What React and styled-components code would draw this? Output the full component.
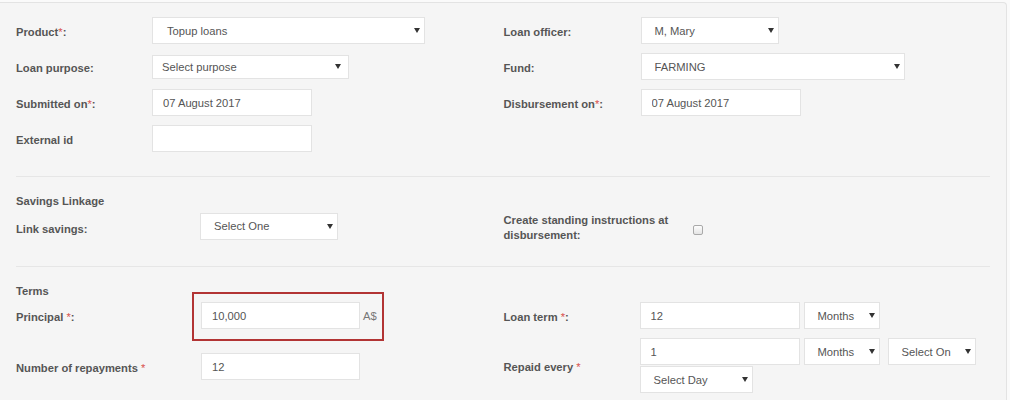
import React from "react";
import styled, { createGlobalStyle } from "styled-components";

const Global = createGlobalStyle`
  html, body { margin: 0; padding: 0; background: #fafafa; }
  body {
    font-family: "Liberation Sans", Arial, sans-serif;
    font-size: 11.2px;
    color: #555;
  }
`;

const Panel = styled.div`
  box-sizing: border-box;
  margin-top: 2px;
  width: 1007px;
  height: 398px;
  overflow: hidden;
  background: #f5f5f5;
  border-top: 1px solid #e3e3e3;
  border-right: 1px solid #e3e3e3;
  border-top-right-radius: 4px;
  padding: 14px 15px 0 16px;
`;

const Columns = styled.div`
  display: grid;
  grid-template-columns: 1fr 1fr;
  align-items: ${(p) => p.$align || "start"};
`;

const Stack = styled.div`
  display: flex;
  flex-direction: column;
  gap: ${(p) => p.$gap ?? 9}px;
`;

const Field = styled.div`
  display: flex;
  align-items: center;
  min-height: 27px;
`;

const Label = styled.label`
  flex: 0 0 ${(p) => p.$w}px;
  box-sizing: border-box;
  padding-top: ${(p) => p.$shift ?? 4}px;
  padding-right: 12px;
  font-weight: bold;
  line-height: 15px;
  color: #555;
`;

const Req = styled.span`
  color: #d9534f;
  font-weight: normal;
`;

const Heading = styled.div`
  font-weight: bold;
  line-height: 15px;
  color: #555;
  margin-bottom: ${(p) => p.$mb ?? 0}px;
`;

const Divider = styled.hr`
  border: 0;
  height: 1px;
  background: #e6e6e6;
  margin: ${(p) => p.$top}px 1px 17px 0;
`;

const TextInput = styled.input`
  box-sizing: border-box;
  width: ${(p) => p.$w}px;
  height: 27px;
  margin: 0;
  padding: 0 10px;
  border: 1px solid #e3e3e3;
  border-radius: 0;
  background: #fff;
  font-family: "Liberation Sans", Arial, sans-serif;
  font-size: 11.2px;
  color: #555;
  outline: none;
`;

const SelectBox = styled.div`
  box-sizing: border-box;
  width: ${(p) => p.$w}px;
  height: ${(p) => p.$h ?? 27}px;
  margin-left: ${(p) => p.$ml ?? 0}px;
  padding: 0 ${(p) => p.$pr ?? 4}px 0 ${(p) => p.$pl ?? 13}px;
  display: flex;
  align-items: center;
  justify-content: space-between;
  background: #fff;
  border: 1px solid #e3e3e3;
  color: #555;
  font-size: 11.2px;
  white-space: nowrap;
`;

const Caret = styled.span`
  flex: none;
  width: 0;
  height: 0;
  border-left: 3px solid transparent;
  border-right: 3px solid transparent;
  border-top: 5px solid #333;
`;

const Controls = styled.div`
  flex: 1;
  display: flex;
  flex-wrap: wrap;
  align-items: center;
  gap: 1px 4px;
`;

const Highlighted = styled.div`
  position: relative;
  display: flex;
  align-items: center;
  &::before {
    content: "";
    position: absolute;
    top: -10px;
    left: -9px;
    right: -7px;
    bottom: -12px;
    border: 2px solid #b23434;
    pointer-events: none;
  }
`;

const Addon = styled.span`
  margin-left: 3px;
  color: #777;
  font-size: 11.2px;
`;

const Checkbox = styled.span`
  flex: none;
  box-sizing: border-box;
  width: 10px;
  height: 10px;
  margin-left: 5px;
  margin-top: 8px;
  border: 1px solid #a9a9a9;
  border-radius: 2px;
  background: linear-gradient(#fdfdfd, #e4e4e4);
`;

const Select = ({ children, ...rest }) => (
  <SelectBox {...rest}>
    <span>{children}</span>
    <Caret />
  </SelectBox>
);

export default function App() {
  return (
    <>
      <Global />
      <Panel>
        <Columns>
          <Stack>
            <Field>
              <Label $w={136}>
                Product<Req>*</Req>:
              </Label>
              <Select $w={273} $pl={14}>Topup loans</Select>
            </Field>
            <Field>
              <Label $w={136}>Loan purpose:</Label>
              <Select $w={197} $h={24} $pl={9} $pr={7}>
                Select purpose
              </Select>
            </Field>
            <Field>
              <Label $w={136}>
                Submitted on<Req>*</Req>:
              </Label>
              <TextInput $w={160} readOnly defaultValue="07 August 2017" />
            </Field>
            <Field>
              <Label $w={136}>External id</Label>
              <TextInput $w={160} readOnly defaultValue="" />
            </Field>
          </Stack>
          <Stack>
            <Field>
              <Label $w={137}>Loan officer:</Label>
              <Select $w={138}>M, Mary</Select>
            </Field>
            <Field>
              <Label $w={137}>Fund:</Label>
              <Select $w={264}>FARMING</Select>
            </Field>
            <Field>
              <Label $w={137}>
                Disbursement on<Req>*</Req>:
              </Label>
              <TextInput $w={160} readOnly defaultValue="07 August 2017" />
            </Field>
          </Stack>
        </Columns>

        <Divider $top={24} />

        <Heading $mb={0}>Savings Linkage</Heading>
        <Columns $align="center">
          <Field>
            <Label $w={184} $shift={6}>Link savings:</Label>
            <Select $w={138}>Select One</Select>
          </Field>
          <Field>
            <Label $w={184}>Create standing instructions at disbursement:</Label>
            <Checkbox />
          </Field>
        </Columns>

        <Divider $top={23} />

        <Heading $mb={3}>Terms</Heading>
        <Columns>
          <Stack $gap={24}>
            <Field>
              <Label $w={185}>
                Principal <Req>*</Req>:
              </Label>
              <Highlighted>
                <TextInput $w={159} readOnly defaultValue="10,000" />
                <Addon>A$</Addon>
              </Highlighted>
            </Field>
            <Field>
              <Label $w={185}>
                Number of repayments <Req>*</Req>
              </Label>
              <TextInput $w={159} readOnly defaultValue="12" />
            </Field>
          </Stack>
          <Stack>
            <Field>
              <Label $w={136}>
                Loan term <Req>*</Req>:
              </Label>
              <Controls>
                <TextInput $w={160} readOnly defaultValue="12" />
                <Select $w={76}>Months</Select>
              </Controls>
            </Field>
            <Field>
              <Label $w={136}>
                Repaid every <Req>*</Req>
              </Label>
              <Controls>
                <TextInput $w={160} readOnly defaultValue="1" />
                <Select $w={76}>Months</Select>
                <Select $w={88} $ml={4}>
                  Select On
                </Select>
                <Select $w={113}>Select Day</Select>
              </Controls>
            </Field>
          </Stack>
        </Columns>
      </Panel>
    </>
  );
}
